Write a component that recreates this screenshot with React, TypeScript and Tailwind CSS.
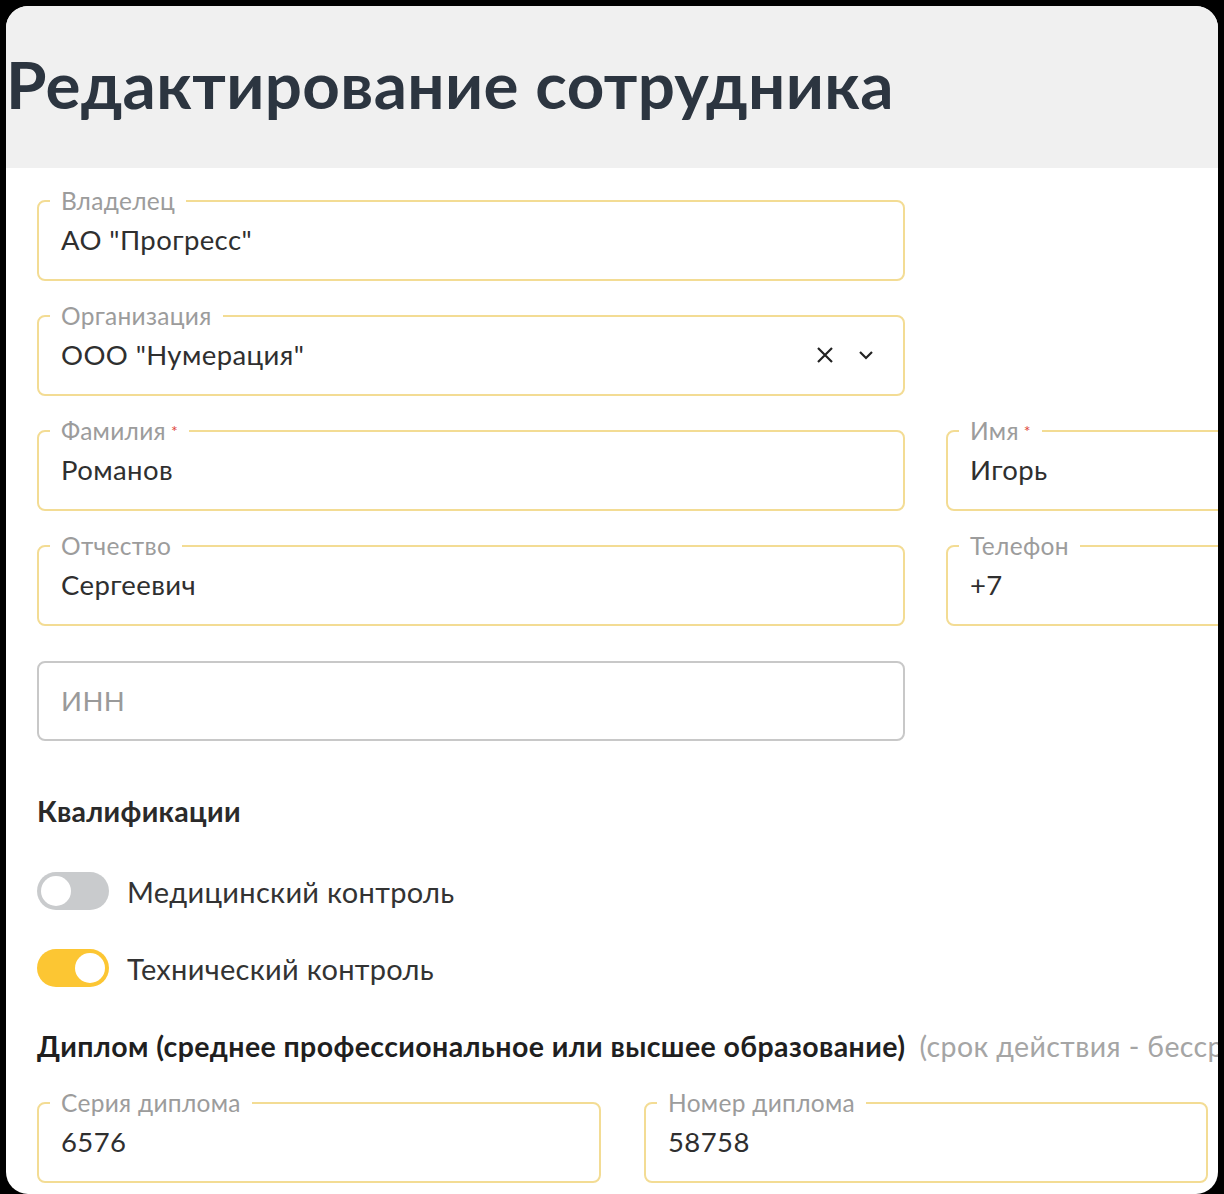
import React from "react";

const F = { fontFamily: "Lato, 'Noto Sans', sans-serif" };

function Field({ label, value, req, w, children }: { label: string; value: string; req?: boolean; w: string; children?: React.ReactNode }) {
  return (
    <fieldset className={`${w} h-[92px] shrink-0 border-2 border-[#f3dc94] rounded-[8px] px-[22px] m-0 pb-0`}>
      <legend className="px-[11px] -ml-[11px] text-[24.5px] tracking-[0.3px] leading-[24px] text-[#9c9c9c]">
        {label}
        {req && <span className="text-[#e0453a] text-[16px] align-top ml-[5px]">*</span>}
      </legend>
      <div className="flex items-center mt-[11px] h-[32px] text-[27.5px] tracking-[0.4px] text-[#2f2f2f]">
        <span className="flex-1">{value}</span>
        {children}
      </div>
    </fieldset>
  );
}

function Toggle({ on, label }: { on: boolean; label: string }) {
  return (
    <div className="flex items-center gap-[18px] h-[38px]">
      <div className={`w-[72px] h-[38px] shrink-0 rounded-full relative ${on ? "bg-[#fcc633]" : "bg-[#c9cbcd]"}`}>
        <div className={`absolute top-[4px] w-[30px] h-[30px] rounded-full bg-white ${on ? "left-[38px]" : "left-[4px]"}`} />
      </div>
      <span className="text-[29px] leading-none tracking-[0.3px] text-[#333]">{label}</span>
    </div>
  );
}

export default function App() {
  return (
    <div className="w-[1224px] h-[1194px] bg-black overflow-hidden pt-[6px] pl-[6px]" style={F}>
      <div className="w-[1212px] h-[1188px] bg-white rounded-[22px] overflow-hidden">
        <div className="h-[162px] bg-[#f0f0f0] flex items-center pb-[6px]">
          <h1 className="text-[65.5px] font-bold text-[#2c3540] tracking-[0.4px] leading-none">Редактирование сотрудника</h1>
        </div>
        <div className="pl-[31px] pt-[21px]">
          <div className="flex flex-col gap-[23px]">
            <Field label="Владелец" value={'АО "Прогресс"'} w="w-[868px]" />
            <Field label="Организация" value={'ООО "Нумерация"'} w="w-[868px]">
              <svg width="20" height="20" viewBox="0 0 20 20" className="mr-[22px]"><path d="M3 3L17 17M17 3L3 17" stroke="#222" strokeWidth="2.2" /></svg>
              <svg width="18" height="12" viewBox="0 0 18 12" className="mr-[6px]"><path d="M3 3L9 9L15 3" stroke="#222" strokeWidth="2.2" fill="none" /></svg>
            </Field>
            <div className="flex gap-[41px]">
              <Field label="Фамилия" req value="Романов" w="w-[868px]" />
              <Field label="Имя" req value="Игорь" w="w-[320px]" />
            </div>
            <div className="flex gap-[41px]">
              <Field label="Отчество" value="Сергеевич" w="w-[868px]" />
              <Field label="Телефон" value="+7" w="w-[320px]" />
            </div>
          </div>
          <div className="mt-[35px] w-[868px] h-[80px] border-2 border-[#c8c8c8] rounded-[8px] flex items-center px-[22px] text-[27.5px] tracking-[0.4px] text-[#9a9a9a]">ИНН</div>
          <div className="mt-[52px] text-[28.5px] tracking-[0.3px] font-bold text-[#2a2a2a] leading-[36px]">Квалификации</div>
          <div className="mt-[43px] flex flex-col gap-[39px]">
            <Toggle on={false} label="Медицинский контроль" />
            <Toggle on label="Технический контроль" />
          </div>
          <div className="mt-[41px] text-[28.5px] leading-[36px] tracking-[0.4px] whitespace-nowrap">
            <span className="font-bold text-[#1f1f1f]">Диплом (среднее профессиональное или высшее образование)</span>
            <span className="text-[#a5a5a5] ml-[14px]">(срок действия - бессрочно)</span>
          </div>
          <div className="mt-[27px] flex gap-[43px]">
            <Field label="Серия диплома" value="6576" w="w-[564px]" />
            <Field label="Номер диплома" value="58758" w="w-[564px]" />
          </div>
        </div>
      </div>
    </div>
  );
}
